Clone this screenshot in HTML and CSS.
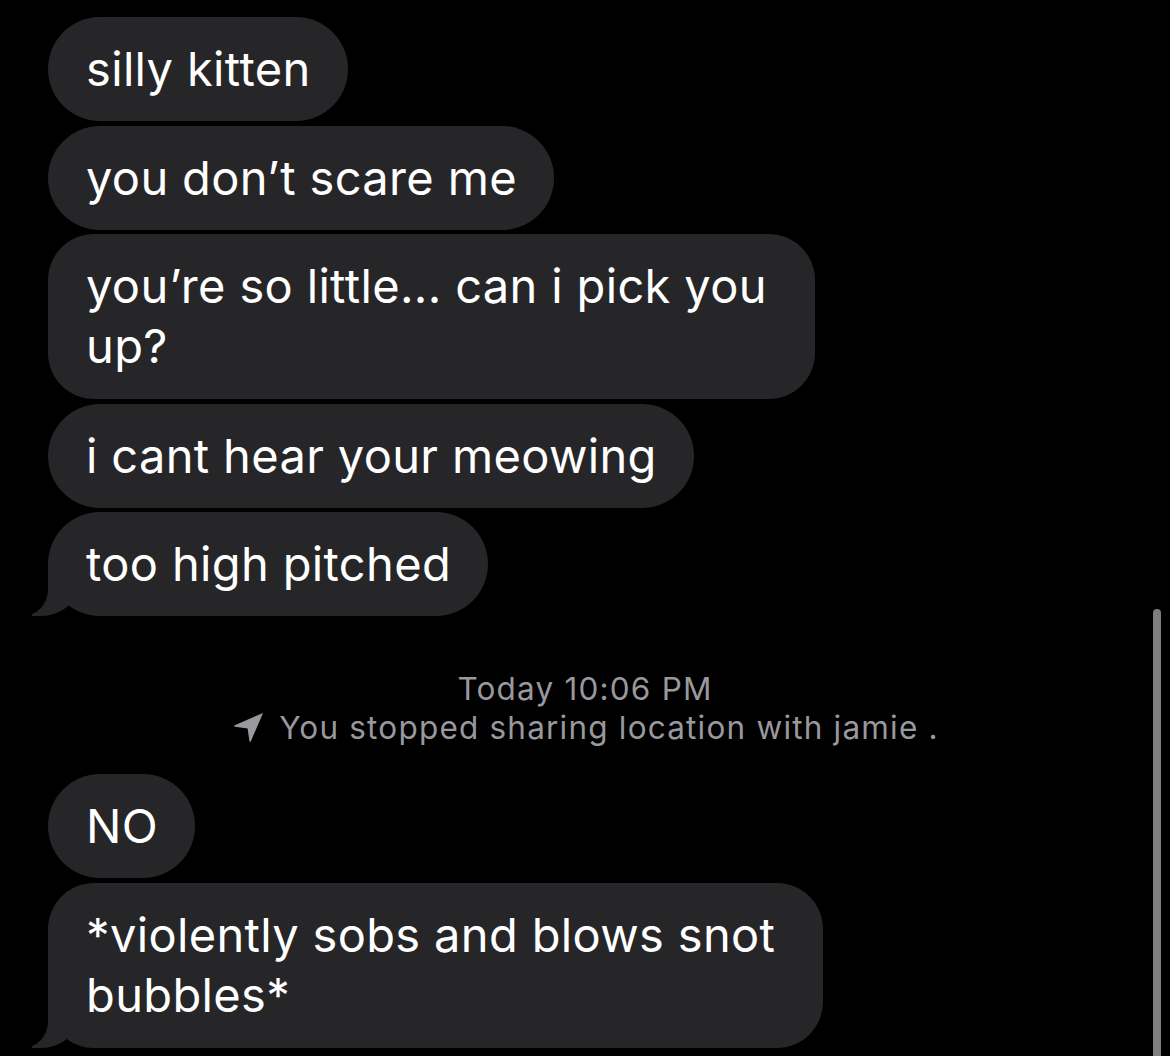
FILE: index.html
```html
<!DOCTYPE html>
<html lang="en">

<head>
  <meta charset="UTF-8">
  <meta name="viewport" content="width=device-width, initial-scale=1.0">
  <title>Messages</title>
  <link rel="stylesheet" href="styles.css">
</head>

<body>
  <div class="thread">
    <div class="bubble">silly kitten</div>
    <div class="bubble">you don’t scare me</div>
    <div class="bubble multi">you’re so little... can i pick you<br>up?</div>
    <div class="bubble">i cant hear your meowing</div>
    <div class="bubble tail">too high pitched</div>

    <div class="meta">
      <div class="meta-time">Today 10:06 PM</div>
      <div class="meta-note">
        <svg class="arrow" viewBox="0 0 24 24" width="35" height="35">
          <path d="M22 2 L2.6 10.4 Q1.6 11 2.7 11.4 L11.4 12.6 L12.6 21.3 Q13 22.4 13.6 21.4 Z" fill="#98989d" />
        </svg>
        <span>You stopped sharing location with jamie .</span>
      </div>
    </div>

    <div class="bubble">NO</div>
    <div class="bubble multi tail">*violently sobs and blows snot<br>bubbles*</div>
  </div>

  <div class="scrollbar"></div>
</body>

</html>
```

FILE: styles.css
```css
body {
  margin: 0;
  background-color: #000;
  font-family: Inter, "Noto Sans", sans-serif;
  color: #fff;
  height: 1056px;
  overflow: hidden;
}

.thread {
  display: flex;
  flex-direction: column;
  align-items: flex-start;
  gap: 4.5px;
  padding: 17px 0 0 48px;
}

.bubble {
  position: relative;
  background-color: #262628;
  font-size: 47px;
  letter-spacing: 0.35px;
  line-height: 60px;
  padding: 22px 37px 22px 38px;
  border-radius: 52px;
  white-space: nowrap;
}

.bubble.multi {
  border-radius: 46px;
  padding-right: 48px;
  padding-bottom: 23px;
}

.tail::before {
  content: "";
  position: absolute;
  left: -16px;
  bottom: 0;
  width: 48px;
  height: 54px;
  background-color: #262628;
  border-bottom-right-radius: 40px 34px;
}

.tail::after {
  content: "";
  position: absolute;
  left: -62px;
  bottom: 0;
  width: 62px;
  height: 54px;
  background-color: #000;
  border-bottom-right-radius: 26px;
}

.meta {
  align-self: stretch;
  margin: 48.5px 48px 22.5px 0;
  text-align: center;
  color: #98989d;
  font-size: 31.5px;
  letter-spacing: 1.2px;
  line-height: 39px;
}

.meta-note {
  display: flex;
  justify-content: center;
  align-items: center;
  gap: 13px;
}

.scrollbar {
  position: absolute;
  top: 609px;
  right: 9px;
  width: 8px;
  height: 460px;
  border-radius: 4px;
  background-color: #7f7f7f;
}
```
